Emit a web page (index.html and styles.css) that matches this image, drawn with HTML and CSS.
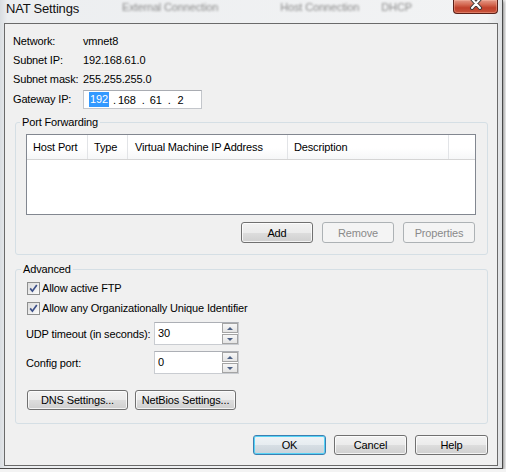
FILE: index.html
```html
<!DOCTYPE html>
<html lang="en">
<head>
  <meta charset="UTF-8">
  <title>NAT Settings</title>
  <link rel="stylesheet" href="styles.css">
</head>
<body>
  <div class="window">
    <div class="titlebar">
      <span class="title">NAT Settings</span>
      <!-- blurred window behind the glass frame -->
      <div class="behind">
        <span class="b1">External Connection</span>
        <span class="b2">Host Connection</span>
        <span class="b3">DHCP</span>
      </div>
      <button class="close" aria-label="Close">
        <svg width="14" height="10" viewBox="0 0 14 10">
          <path d="M3 -1 L11 8 M11 -1 L3 8" stroke="#3b3b3b" stroke-width="4" stroke-linecap="round"/>
          <path d="M3 -1 L11 8 M11 -1 L3 8" stroke="#fff" stroke-width="2" stroke-linecap="round"/>
        </svg>
      </button>
    </div>

    <div class="client">
      <div class="info">
        <span>Network:</span><span>vmnet8</span>
        <span>Subnet IP:</span><span>192.168.61.0</span>
        <span>Subnet mask:</span><span>255.255.255.0</span>
        <span class="gw-label">Gateway IP:</span>
        <div class="ipbox">
          <span class="sel">192</span>
          <span class="dot d1">.</span><span class="oct o2">168</span>
          <span class="dot d2">.</span><span class="oct o3">61</span>
          <span class="dot d3">.</span><span class="oct o4">2</span>
        </div>
      </div>

      <fieldset class="group ports">
        <legend>Port Forwarding</legend>
        <div class="group-body">
          <div class="listview">
            <div class="lv-head">
              <div class="col c1">Host Port</div>
              <div class="col c2">Type</div>
              <div class="col c3">Virtual Machine IP Address</div>
              <div class="col c4">Description</div>
              <div class="col c5"></div>
            </div>
          </div>
          <div class="btn-row right">
            <button class="btn">Add</button>
            <button class="btn" disabled>Remove</button>
            <button class="btn" disabled>Properties</button>
          </div>
        </div>
      </fieldset>

      <fieldset class="group advanced">
        <legend>Advanced</legend>
        <div class="group-body">
          <label class="check">
            <span class="box"><svg width="11" height="11" viewBox="0 0 11 11"><path d="M2.2 5.4 L4.4 8.2 L8.8 2" fill="none" stroke="#3d5088" stroke-width="1.7"/></svg></span>
            Allow active FTP
          </label>
          <label class="check">
            <span class="box"><svg width="11" height="11" viewBox="0 0 11 11"><path d="M2.2 5.4 L4.4 8.2 L8.8 2" fill="none" stroke="#3d5088" stroke-width="1.7"/></svg></span>
            Allow any Organizationally Unique Identifier
          </label>

          <div class="field first">
            <span class="field-label">UDP timeout (in seconds):</span>
            <div class="spin">
              <input type="text" value="30">
              <div class="arrows"><span class="up"></span><span class="down"></span></div>
            </div>
          </div>
          <div class="field">
            <span class="field-label">Config port:</span>
            <div class="spin">
              <input type="text" value="0">
              <div class="arrows"><span class="up"></span><span class="down"></span></div>
            </div>
          </div>

          <div class="btn-row left">
            <button class="btn wide">DNS Settings...</button>
            <button class="btn wide">NetBios Settings...</button>
          </div>
        </div>
      </fieldset>

      <div class="dlg-buttons">
        <button class="btn default">OK</button>
        <button class="btn">Cancel</button>
        <button class="btn">Help</button>
      </div>
    </div>
  </div>
</body>
</html>
```

FILE: styles.css
```css
* {
  margin: 0;
  padding: 0;
  box-sizing: border-box;
}

body {
  background: #f3f3f3;
  font-family: "Liberation Sans", Arial, sans-serif;
  font-size: 11px;
  letter-spacing: -0.15px;
  color: #000;
}

.window {
  width: 503px;
  height: 469px;
  display: flex;
  flex-direction: column;
  padding: 0 4px 2px 4px;
  background: linear-gradient(to right, #d9dde1, #eceef0 1.5%, #f2f3f4 97%, #dfe1e3);
  border-right: 1px solid #4a4a4a;
  border-bottom: 1px solid #4a4a4a;
  box-shadow: 1px 1px 3px rgba(0, 0, 0, 0.45);
}

/* Title bar */
.titlebar {
  height: 23px;
  flex-shrink: 0;
  display: flex;
  align-items: flex-start;
  padding-left: 2px;
}

.title {
  font-size: 13px;
  letter-spacing: -0.2px;
  line-height: 18px;
  color: #111;
}

.behind {
  display: flex;
  color: #8c8c8c;
  filter: blur(1.1px);
  line-height: 13px;
  margin-top: 1px;
}

.behind .b1 { margin-left: 43px; }
.behind .b2 { margin-left: 62px; }
.behind .b3 { margin-left: 22px; }

.close {
  margin-left: auto;
  width: 45px;
  height: 14px;
  border: 1px solid #5a2018;
  border-top: none;
  border-radius: 0 0 4px 4px;
  background: linear-gradient(#e49a88 0%, #d46a53 35%, #c0412b 60%, #c9543c 100%);
  box-shadow: inset 0 0 0 1px rgba(255, 200, 180, 0.35);
  display: flex;
  justify-content: center;
  align-items: flex-start;
}

/* Dialog client area */
.client {
  flex: 1;
  display: flex;
  flex-direction: column;
  background: #f0f0f0;
  border: 1px solid #6a6a6a;
}

.info {
  display: grid;
  grid-template-columns: 70px auto;
  grid-template-rows: repeat(3, 19px) 21px;
  align-items: center;
  padding: 7px 0 0 8px;
}

.gw-label,
.ipbox {
  align-self: end;
}

.gw-label {
  line-height: 19px;
}

.ipbox {
  width: 119px;
  height: 19px;
  display: flex;
  align-items: center;
  padding-left: 5px;
  background: #fff;
  border: 1px solid #c3c6cb;
  border-top-color: #a9acb2;
}

.ipbox .sel {
  background: #3399ff;
  color: #fff;
  line-height: 15px;
  width: 20px;
  text-align: center;
}

.ipbox .d1 { margin-left: 4px; }
.ipbox .o2 { margin-left: 2px; }
.ipbox .d2 { margin-left: 6px; }
.ipbox .o3 { margin-left: 5px; }
.ipbox .d3 { margin-left: 6px; }
.ipbox .o4 { margin-left: 7px; }

/* Group boxes */
.group {
  border: 1px solid #d5dfe5;
  border-radius: 3px;
  margin: 6px 9px 0 10px;
  min-width: 0;
}

.group legend {
  margin-left: 4px;
  padding: 0 2px;
  line-height: 14px;
}

.ports .group-body {
  padding: 5px 11px 11px 10px;
}

.advanced {
  margin-top: 7px;
}

.advanced legend {
  margin-left: 5px;
}

.advanced .group-body {
  padding: 2px 10px 13px 11px;
}

/* List view */
.listview {
  height: 81px;
  background: #fff;
  border: 1px solid #828790;
}

.lv-head {
  display: flex;
  height: 25px;
  border-bottom: 1px solid #d5d5d5;
  background: linear-gradient(#ffffff 0%, #ffffff 55%, #f6f7f8 100%);
}

.lv-head .col {
  line-height: 24px;
  padding-left: 6px;
  border-right: 1px solid #e2e4e7;
  white-space: nowrap;
}

.lv-head .c1 { width: 61px; }
.lv-head .c2 { width: 40px; }
.lv-head .c3 { width: 160px; padding-left: 7px; }
.lv-head .c4 { width: 161px; }
.lv-head .c5 { flex: 1; border-right: none; }

/* Buttons */
.btn {
  font: inherit;
  letter-spacing: inherit;
  color: #000;
  width: 72px;
  height: 21px;
  border: 1px solid #707070;
  border-radius: 3px;
  background: linear-gradient(#f2f2f2 0%, #ebebeb 50%, #dddddd 51%, #cfcfcf 100%);
  box-shadow: inset 0 0 0 1px rgba(255, 255, 255, 0.75);
}

.btn:disabled {
  color: #8a8a8a;
  border-color: #adb2b5;
  background: #f4f4f4;
  box-shadow: none;
}

.btn.default {
  border-color: #3c7fb1;
  box-shadow: inset 0 0 0 1px #56d3f6;
  background: linear-gradient(#eef3f6 0%, #e6ecf0 50%, #d6dee4 51%, #cad3da 100%);
}

.btn.wide {
  width: 101px;
  height: 20px;
}

.btn-row {
  display: flex;
}

.btn-row.right {
  justify-content: flex-end;
  gap: 9px;
  margin-top: 7px;
  padding-right: 1px;
}

.btn-row.left {
  gap: 7px;
  margin-top: 16px;
}

/* Check boxes */
.check {
  display: flex;
  align-items: center;
  gap: 2px;
  height: 20px;
}

.box {
  width: 13px;
  height: 13px;
  border: 1px solid #8e8f8f;
  background: linear-gradient(135deg, #dcdcdc, #fbfbfb);
  display: flex;
}

/* Spin fields */
.field {
  display: flex;
  align-items: center;
  margin-top: 6px;
  margin-left: -1px;
}

.field.first {
  margin-top: 4px;
}

.field-label {
  width: 128px;
}

.spin {
  display: flex;
  width: 85px;
  height: 23px;
  background: #fff;
  border: 1px solid #c9ccd1;
  border-top-color: #acafb5;
}

.spin input {
  width: 67px;
  height: 100%;
  border: none;
  outline: none;
  font: inherit;
  letter-spacing: inherit;
  padding: 0 0 2px 3px;
  background: transparent;
}

.arrows {
  width: 16px;
  display: flex;
  flex-direction: column;
  gap: 1px;
  padding: 0 0 0 0;
}

.arrows span {
  flex: 1;
  border: 1px solid #a4a4a4;
  background: linear-gradient(#f7f7f7, #e4e4e4);
  display: flex;
  align-items: center;
  justify-content: center;
}

.arrows .up::after {
  content: "";
  border-left: 3px solid transparent;
  border-right: 3px solid transparent;
  border-bottom: 3px solid #4d6185;
}

.arrows .down::after {
  content: "";
  border-left: 3px solid transparent;
  border-right: 3px solid transparent;
  border-top: 3px solid #4d6185;
}

/* OK / Cancel / Help */
.dlg-buttons {
  display: flex;
  justify-content: flex-end;
  gap: 8px;
  margin: 11px 9px 0 0;
}

.dlg-buttons .btn {
  width: 73px;
  height: 20px;
}
```
